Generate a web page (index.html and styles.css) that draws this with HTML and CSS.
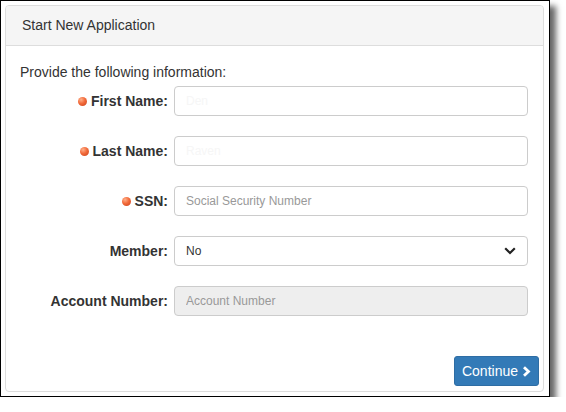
FILE: index.html
```html
<!DOCTYPE html>
<html>
<head>
<meta charset="utf-8">
<link rel="stylesheet" href="styles.css">
</head>
<body>
<div class="frame">
  <div class="panel">
    <div class="panel-heading">Start New Application</div>
    <div class="panel-body">
      <p class="intro">Provide the following information:</p>
      <div class="form">
        <label class="label"><span class="req"></span>First Name:</label>
        <input class="input" type="text" placeholder="Den">
        <label class="label"><span class="req"></span>Last Name:</label>
        <input class="input" type="text" placeholder="Raven">
        <label class="label"><span class="req"></span>SSN:</label>
        <input class="input ph-grey" type="text" placeholder="Social Security Number">
        <label class="label">Member:</label>
        <div class="select-wrap">
          <select class="input select"><option>No</option></select>
          <svg class="chev" width="12" height="8" viewBox="0 0 12 8"><path d="M1.2 1.3 L6 6 L10.8 1.3" fill="none" stroke="#222" stroke-width="2.2"/></svg>
        </div>
        <label class="label">Account Number:</label>
        <input class="input ph-grey disabled" type="text" placeholder="Account Number" disabled>
      </div>
    </div>
    <div class="panel-footer">
      <button class="btn">Continue <svg class="btn-chev" width="9" height="11" viewBox="0 0 9 11"><path d="M2 1.2 L6.5 5.5 L2 9.8" fill="none" stroke="#fff" stroke-width="2.8"/></svg></button>
    </div>
  </div>
</div>
</body>
</html>
```

FILE: styles.css
```css
html, body {
  margin: 0;
  padding: 0;
  background: #fff;
}
body {
  font-family: "Liberation Sans", Arial, sans-serif;
  color: #333;
  font-size: 14px;
}
.frame {
  box-sizing: content-box;
  width: 539px;
  height: 387px;
  border: 1px solid #000;
  padding: 4px 5px 4px 4px;
  box-shadow: 6px 6px 6px rgba(0,0,0,0.6);
  background: #fff;
}
.panel {
  height: 100%;
  border: 1px solid #ddd;
  border-radius: 4px;
  box-sizing: border-box;
  display: flex;
  flex-direction: column;
}
.panel-heading {
  background: #f5f5f5;
  border-bottom: 1px solid #ddd;
  border-radius: 3px 3px 0 0;
  height: 39px;
  line-height: 39px;
  padding: 0 16px;
  font-size: 14px;
  color: #333;
}
.panel-body {
  padding: 16px 15px 0 14px;
  flex: 1;
}
.intro {
  margin: 0 0 4px;
  line-height: 20px;
  font-size: 14px;
}
.form {
  display: grid;
  grid-template-columns: 148px 1fr;
  column-gap: 6px;
  row-gap: 20px;
  align-items: center;
}
.label {
  text-align: right;
  font-weight: bold;
  font-size: 14px;
  color: #333;
  display: flex;
  justify-content: flex-end;
  align-items: center;
}
.req {
  display: inline-block;
  width: 9px;
  height: 9px;
  border-radius: 50%;
  background: radial-gradient(circle at 35% 30%, #ffb08a 0%, #f26a3a 45%, #c8401a 100%);
  margin-right: 4px;
}
.input {
  height: 30px;
  box-sizing: border-box;
  border: 1px solid #ccc;
  border-radius: 4px;
  padding: 0 11px;
  font-family: "Liberation Sans", Arial, sans-serif;
  font-size: 12px;
  color: #333;
  background: #fff;
  width: 100%;
  margin: 0;
  outline: none;
}
.input::placeholder {
  color: #f6f6f6;
}
.ph-grey::placeholder {
  color: #999;
}
.disabled {
  background: #eee;
}
.select-wrap {
  position: relative;
}
.select {
  appearance: none;
  -webkit-appearance: none;
  padding-left: 11px;
}
.chev {
  position: absolute;
  right: 12px;
  top: 11px;
  pointer-events: none;
}
.panel-footer {
  display: flex;
  justify-content: flex-end;
  padding: 0 4px 5px 0;
}
.btn {
  width: 85px;
  height: 30px;
  background: #337ab7;
  border: 1px solid #2e6da4;
  border-radius: 3px;
  color: #fff;
  font-family: "Liberation Sans", Arial, sans-serif;
  font-size: 14px;
  padding: 0;
  display: flex;
  align-items: center;
  justify-content: center;
  gap: 4px;
}
.btn-chev {
  margin-top: 1px;
}
```
